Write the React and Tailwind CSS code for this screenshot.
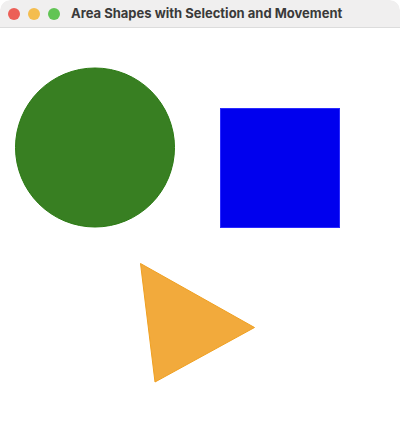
import React from 'react';

export default function App() {
  return (
    <div className="w-[400px] h-[428px] bg-white overflow-hidden rounded-t-[10px]">
      {/* barre de titre */}
      <div className="h-[28px] flex items-center bg-[#f0efef] border-b border-[#dcdcdc] rounded-t-[10px]">
        <div className="flex items-center gap-[8px] pl-[8px]">
          <span className="block w-[12px] h-[12px] rounded-full bg-[#ec5f57]" />
          <span className="block w-[12px] h-[12px] rounded-full bg-[#f4bd4f]" />
          <span className="block w-[12px] h-[12px] rounded-full bg-[#61c454]" />
        </div>
        <div
          className="ml-[11px] text-[13px] font-bold text-[#3a3a3a]"
          style={{ fontFamily: 'Inter, "Liberation Sans", sans-serif' }}
        >
          Area Shapes with Selection and Movement
        </div>
      </div>

      {/* zone de dessin */}
      <svg width="400" height="400" viewBox="0 28 400 400" className="block">
        <circle cx="95" cy="147.5" r="79.5" fill="#387f22" stroke="#2a7a12" strokeWidth="1" />
        <rect x="220.5" y="108.5" width="119" height="119" fill="#0000ee" stroke="#2a2aff" strokeWidth="1" />
        <polygon points="140.5,263.5 254.5,327.5 155,382" fill="#f2aa3c" stroke="#f0a020" strokeWidth="1" />
      </svg>
    </div>
  );
}
